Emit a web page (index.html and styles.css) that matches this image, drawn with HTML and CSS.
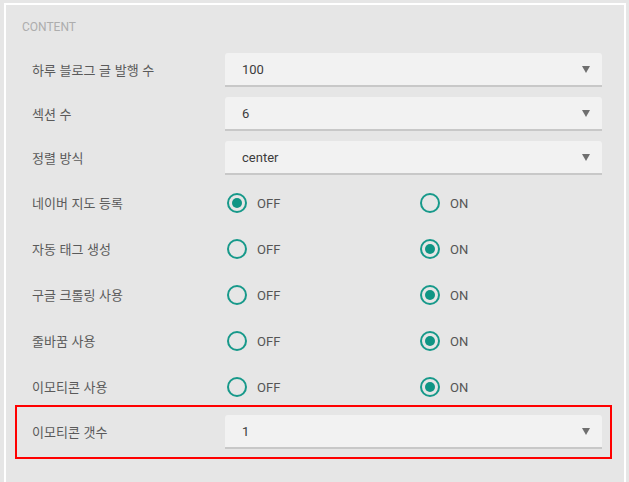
FILE: index.html
```html
<!DOCTYPE html>
<html lang="ko">
<head>
<meta charset="utf-8">
<title>Content settings</title>
<link rel="stylesheet" href="styles.css">
</head>
<body>
<div class="panel">
  <div class="heading">CONTENT</div>
  <div class="rows">
    <div class="row">
      <div class="label">하루 블로그 글 발행 수</div>
      <div class="select"><span class="value">100</span><span class="arrow"></span></div>
    </div>
    <div class="row">
      <div class="label">섹션 수</div>
      <div class="select"><span class="value">6</span><span class="arrow"></span></div>
    </div>
    <div class="row">
      <div class="label">정렬 방식</div>
      <div class="select"><span class="value">center</span><span class="arrow"></span></div>
    </div>
    <div class="row radio-row">
      <div class="label">네이버 지도 등록</div>
      <div class="options">
        <div class="option"><span class="radio checked"></span><span class="opt-text">OFF</span></div>
        <div class="option"><span class="radio"></span><span class="opt-text">ON</span></div>
      </div>
    </div>
    <div class="row radio-row">
      <div class="label">자동 태그 생성</div>
      <div class="options">
        <div class="option"><span class="radio"></span><span class="opt-text">OFF</span></div>
        <div class="option"><span class="radio checked"></span><span class="opt-text">ON</span></div>
      </div>
    </div>
    <div class="row radio-row">
      <div class="label">구글 크롤링 사용</div>
      <div class="options">
        <div class="option"><span class="radio"></span><span class="opt-text">OFF</span></div>
        <div class="option"><span class="radio checked"></span><span class="opt-text">ON</span></div>
      </div>
    </div>
    <div class="row radio-row">
      <div class="label">줄바꿈 사용</div>
      <div class="options">
        <div class="option"><span class="radio"></span><span class="opt-text">OFF</span></div>
        <div class="option"><span class="radio checked"></span><span class="opt-text">ON</span></div>
      </div>
    </div>
    <div class="row radio-row">
      <div class="label">이모티콘 사용</div>
      <div class="options">
        <div class="option"><span class="radio"></span><span class="opt-text">OFF</span></div>
        <div class="option"><span class="radio checked"></span><span class="opt-text">ON</span></div>
      </div>
    </div>
    <div class="row highlighted">
      <div class="label">이모티콘 갯수</div>
      <div class="select"><span class="value">1</span><span class="arrow"></span></div>
    </div>
  </div>
</div>
</body>
</html>
```
FILE: styles.css
```css
html, body {
  margin: 0;
  padding: 0;
  background: #e6e6e6;
  height: 100%;
  overflow: hidden;
}

body {
  font-family: Roboto, "Noto Sans CJK KR", "Liberation Sans", sans-serif;
  color: #555;
}

.panel {
  margin: 3px 3px 0 4px;
  border: 2px solid #ffffff;
  border-bottom: none;
  background: #e6e6e6;
  height: 600px;
  box-sizing: border-box;
}

.heading {
  padding: 15px 0 0 16px;
  font-size: 12px;
  line-height: 14px;
  color: #adadad;
}

.rows {
  margin: 19px 22px 0 19px;
  display: flex;
  flex-direction: column;
  gap: 10px;
}

.row {
  display: grid;
  grid-template-columns: 193px 1fr;
  align-items: center;
  height: 34px;
  padding-left: 7px;
}

.radio-row {
  height: 36px;
}

.highlighted {
  outline: 2px solid #ff0000;
  outline-offset: 8px;
}

.label {
  font-family: "Noto Sans CJK KR", sans-serif;
  font-size: 13px;
  color: #5a5a5a;
  line-height: 18px;
  white-space: nowrap;
}

.select {
  height: 34px;
  box-sizing: border-box;
  background: #f2f2f2;
  border-bottom: 2px solid #c8c8c8;
  border-radius: 3px 3px 0 0;
  display: flex;
  align-items: center;
  justify-content: space-between;
  padding: 0 12px 0 17px;
}

.value {
  font-size: 13px;
  color: #3c3c3c;
}

.arrow {
  width: 0;
  height: 0;
  border-left: 4.5px solid transparent;
  border-right: 4.5px solid transparent;
  border-top: 7px solid #6f6f6f;
  margin-top: 1px;
}

.options {
  display: grid;
  grid-template-columns: 193px 1fr;
  padding-left: 2px;
}

.option {
  display: flex;
  align-items: center;
  gap: 10px;
}

.radio {
  width: 20px;
  height: 20px;
  box-sizing: border-box;
  border: 2px solid #17998a;
  border-radius: 50%;
  display: flex;
  align-items: center;
  justify-content: center;
}

.radio.checked::after {
  content: "";
  width: 10px;
  height: 10px;
  border-radius: 50%;
  background: #0f9584;
}

.opt-text {
  font-size: 13px;
  color: #555;
}
```
